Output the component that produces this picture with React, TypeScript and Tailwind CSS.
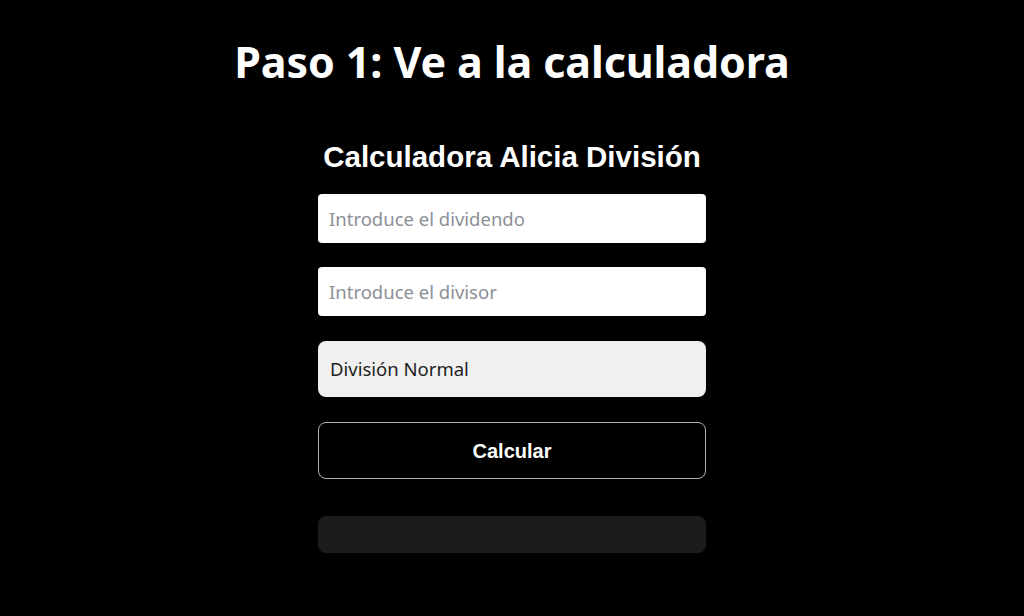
import React from "react";

export default function App() {
  return (
    <div className="w-[1024px] h-[616px] bg-black flex flex-col items-center overflow-hidden">
      <h1
        className="mt-[36px] text-white font-bold text-[43px] leading-[52px] tracking-[-0.1px]"
        style={{ fontFamily: '"Noto Sans", "Open Sans", sans-serif' }}
      >
        Paso 1: Ve a la calculadora
      </h1>
      <div className="mt-[20px] w-[446px] h-[470px] flex flex-col items-center">
        <h2
          className="mt-[31px] text-white font-bold text-[29.5px] leading-[36px]"
          style={{ fontFamily: '"Liberation Sans", Arial, sans-serif' }}
        >
          Calculadora Alicia División
        </h2>
        <div
          className="mt-[19px] w-[388px] flex flex-col"
          style={{ fontFamily: '"Noto Sans", "Open Sans", sans-serif' }}
        >
          <div className="h-[49px] bg-white rounded-[4px] flex items-center px-[11px] text-[18.5px] text-[#8b8f96]">
            Introduce el dividendo
          </div>
          <div className="mt-[24px] h-[49px] bg-white rounded-[4px] flex items-center px-[11px] text-[18.5px] text-[#8b8f96]">
            Introduce el divisor
          </div>
          <div className="mt-[25px] h-[56px] bg-[#f0f0f0] rounded-[8px] flex items-center px-[12px] text-[18.5px] text-[#1e1e1e]">
            División Normal
          </div>
          <div
            className="mt-[25px] h-[57px] border border-[#b0b0b0] rounded-[8px] flex items-center justify-center text-white font-bold text-[20px]"
            style={{ fontFamily: '"Liberation Sans", Arial, sans-serif' }}
          >
            Calcular
          </div>
          <div className="mt-[37px] h-[37px] bg-[#1c1c1c] rounded-[8px]" />
        </div>
      </div>
    </div>
  );
}
